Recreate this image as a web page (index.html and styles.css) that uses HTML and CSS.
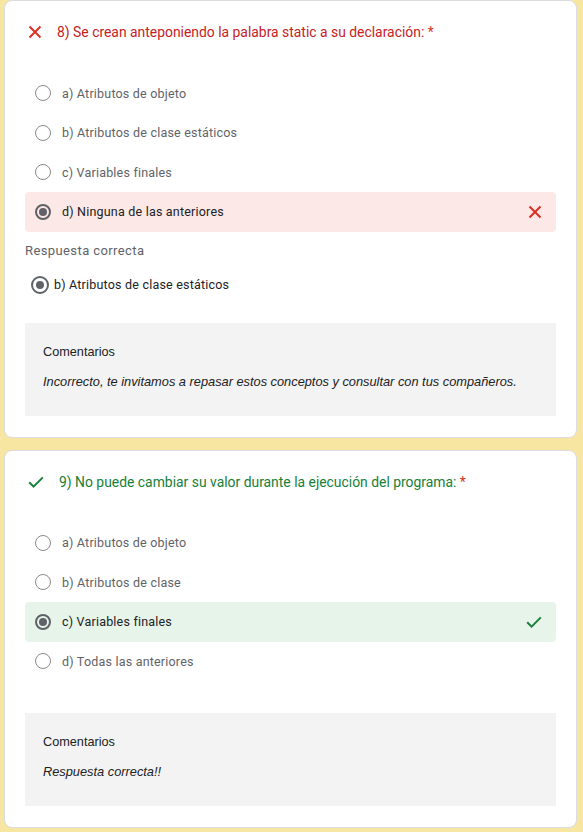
FILE: index.html
```html
<!DOCTYPE html>
<html lang="es">
<head>
<meta charset="utf-8">
<title>Respuestas</title>
<link rel="stylesheet" href="styles.css">
</head>
<body>
<div class="page">

  <section class="card">
    <div class="q-head wrong">
      <svg class="q-icon" viewBox="0 0 14 14" width="14" height="14"><path d="M1.5 1.5 L12.5 12.5 M12.5 1.5 L1.5 12.5" stroke="#d93025" stroke-width="2" fill="none"/></svg>
      <span>8) Se crean anteponiendo la palabra static a su declaración: <span class="req">*</span></span>
    </div>
    <div class="opts">
      <div class="opt"><span class="radio"></span><span class="txt">a) Atributos de objeto</span></div>
      <div class="opt"><span class="radio"></span><span class="txt">b) Atributos de clase estáticos</span></div>
      <div class="opt"><span class="radio"></span><span class="txt">c) Variables finales</span></div>
      <div class="opt sel bad"><span class="radio on"></span><span class="txt">d) Ninguna de las anteriores</span>
        <svg class="mark" viewBox="0 0 14 14" width="14" height="14"><path d="M1.5 1.5 L12.5 12.5 M12.5 1.5 L1.5 12.5" stroke="#d93025" stroke-width="2" fill="none"/></svg>
      </div>
    </div>
    <div class="correct-label">Respuesta correcta</div>
    <div class="correct-opt"><span class="radio on"></span><span class="txt">b) Atributos de clase estáticos</span></div>
    <div class="feedback">
      <div class="fb-title">Comentarios</div>
      <div class="fb-text">Incorrecto, te invitamos a repasar estos conceptos y consultar con tus compañeros.</div>
    </div>
  </section>

  <section class="card">
    <div class="q-head right">
      <svg class="q-icon" viewBox="0 0 16 14" width="16" height="14"><path d="M1.2 7.2 L5.6 11.6 L14.8 2.4" stroke="#188038" stroke-width="2" fill="none"/></svg>
      <span>9) No puede cambiar su valor durante la ejecución del programa: <span class="req">*</span></span>
    </div>
    <div class="opts">
      <div class="opt"><span class="radio"></span><span class="txt">a) Atributos de objeto</span></div>
      <div class="opt"><span class="radio"></span><span class="txt">b) Atributos de clase</span></div>
      <div class="opt sel good"><span class="radio on"></span><span class="txt">c) Variables finales</span>
        <svg class="mark" viewBox="0 0 16 14" width="16" height="14"><path d="M1.2 7.2 L5.6 11.6 L14.8 2.4" stroke="#188038" stroke-width="2" fill="none"/></svg>
      </div>
      <div class="opt"><span class="radio"></span><span class="txt">d) Todas las anteriores</span></div>
    </div>
    <div class="feedback fb2">
      <div class="fb-title">Comentarios</div>
      <div class="fb-text">Respuesta correcta!!</div>
    </div>
  </section>

</div>
</body>
</html>
```

FILE: styles.css
```css
* { box-sizing: border-box; }
html, body { margin: 0; padding: 0; }
body {
  background: #f6e6a2;
  font-family: Roboto, "Liberation Sans", Arial, sans-serif;
  height: 832px;
  overflow: hidden;
}
.page {
  padding: 0 6px 0 4px;
  display: flex;
  flex-direction: column;
  gap: 12px;
}
.card {
  background: #fff;
  border: 1px solid #dadce0;
  border-radius: 8px;
  padding: 21px 20px 21px 20px;
}
.q-head {
  display: flex;
  align-items: center;
  height: 20px;
  padding-left: 3px;
  font-size: 13.9px;
  line-height: 20px;
}
.q-icon { margin-right: 15px; flex: none; }
.q-head.wrong { color: #c5221f; }
.q-head.right { color: #188038; }
.req { color: #d93025; }
.opts {
  margin-top: 31.5px;
  display: flex;
  flex-direction: column;
}
.opt {
  height: 39.5px;
  display: flex;
  align-items: center;
  padding: 0 14px 0 10px;
  border-radius: 4px;
  font-size: 12.5px;
  letter-spacing: 0.2px;
  color: #5f6368;
}
.opt .txt { flex: 1; }
.opt.sel { color: #202124; }
.opt.bad { background: #fce8e6; }
.opt.good { background: #e6f4ea; }
.mark { flex: none; }
.radio {
  width: 16px;
  height: 16px;
  border: 1.5px solid #8a8a8a;
  border-radius: 50%;
  margin-right: 11px;
  flex: none;
  display: flex;
  align-items: center;
  justify-content: center;
}
.radio.on { border: 2px solid #5f6368; }
.radio.on::after {
  content: "";
  width: 8px;
  height: 8px;
  border-radius: 50%;
  background: #5f6368;
}
.correct-label {
  margin-top: 10px;
  font-size: 13px;
  line-height: 18px;
  letter-spacing: 0.4px;
  color: #5f6368;
}
.correct-opt {
  margin-top: 9px;
  height: 32px;
  display: flex;
  align-items: center;
  padding-left: 6px;
  font-size: 12.5px;
  letter-spacing: 0.2px;
  color: #202124;
}
.correct-opt .radio { width: 18px; height: 18px; margin-right: 5px; }
.feedback {
  margin-top: 22px;
  background: #f3f3f3;
  height: 93px;
  padding: 21px 18px 0 18px;
  font-family: "Liberation Sans", Arial, sans-serif;
  color: #202124;
}
.fb2 { margin-top: 32px; }
.fb-title { font-size: 12.7px; line-height: 16px; }
.fb-text { margin-top: 14px; font-size: 12.8px; line-height: 16px; font-style: italic; }
```
